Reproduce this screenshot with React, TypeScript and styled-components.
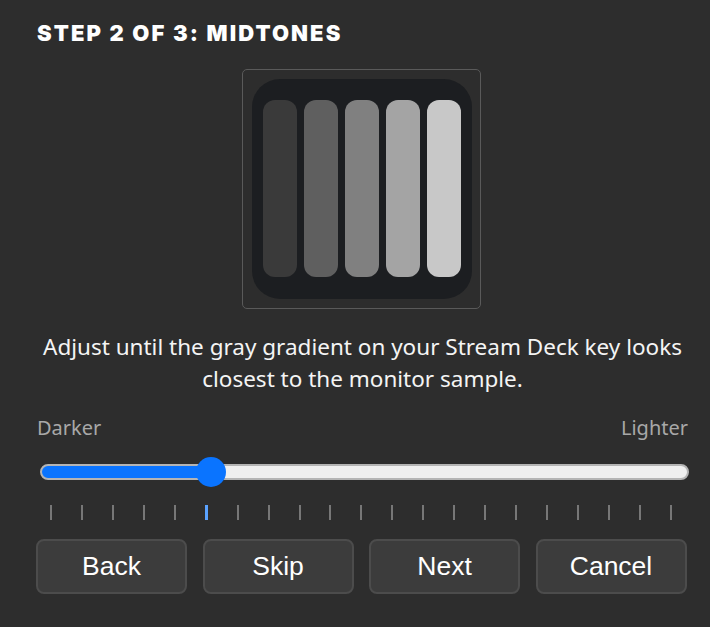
import { useState } from 'react'
import styled, { createGlobalStyle } from 'styled-components'

const GlobalStyle = createGlobalStyle`
  html, body {
    margin: 0;
    padding: 0;
    background: #2d2d2d;
  }
`

const Page = styled.div`
  width: 710px;
  height: 627px;
  box-sizing: border-box;
  padding: 19px 22px 0 37px;
  background: #2d2d2d;
  font-family: 'Noto Sans', 'Open Sans', sans-serif;
  color: #f2f2f2;
  display: flex;
  flex-direction: column;
`

const Title = styled.h2`
  margin: 0;
  font-family: Inter, 'Noto Sans', sans-serif;
  font-weight: 900;
  font-size: 22px;
  line-height: 28px;
  letter-spacing: 2.1px;
  color: #ffffff;
`

const Preview = styled.div`
  align-self: center;
  margin: 22px 0 0 -2px;
  width: 239px;
  height: 240px;
  box-sizing: border-box;
  border: 1.5px solid #5a5a5a;
  border-radius: 5px;
  display: flex;
  align-items: center;
  justify-content: center;
`

const Key = styled.div`
  width: 220px;
  height: 220px;
  box-sizing: border-box;
  padding: 21px 11px 22px;
  background: #1c1e21;
  border-radius: 28px;
  display: flex;
  gap: 7px;
`

const Bar = styled.div<{ $shade: string }>`
  flex: 1;
  border-radius: 12px;
  background: ${p => p.$shade};
`

const Description = styled.p`
  margin: 22px 0 0;
  text-align: center;
  font-size: 22.5px;
  line-height: 32px;
  color: #f4f4f4;
`

const Labels = styled.div`
  margin-top: 20px;
  display: flex;
  justify-content: space-between;
  font-size: 20px;
  line-height: 26px;
  color: #a8a8a8;
`

const Range = styled.input`
  -webkit-appearance: none;
  appearance: none;
  margin: 23px 0 0 3px;
  width: 649px;
  height: 16px;
  box-sizing: border-box;
  border: 2px solid #b4b4b4;
  border-radius: 8px;
  outline: none;

  &::-webkit-slider-thumb {
    -webkit-appearance: none;
    width: 30px;
    height: 30px;
    border-radius: 50%;
    background: #0a74ff;
    border: none;
    cursor: pointer;
  }
`

const Ticks = styled.div`
  margin: 25px 0 0 13px;
  width: 622px;
  display: flex;
  justify-content: space-between;
  align-items: flex-start;
`

const Tick = styled.span<{ $active: boolean }>`
  width: ${p => (p.$active ? '3px' : '2px')};
  height: 15px;
  background: ${p => (p.$active ? '#5aa2ff' : '#777777')};
`

const Buttons = styled.div`
  margin: 19px 0 0 -1px;
  display: grid;
  grid-template-columns: repeat(4, 151px);
  gap: 15.5px;
`

const Button = styled.button`
  height: 55px;
  box-sizing: border-box;
  background: #3c3c3c;
  border: 2px solid #4c4c4c;
  border-radius: 8px;
  color: #ffffff;
  font-family: 'Liberation Sans', Arial, sans-serif;
  font-size: 26.5px;
  cursor: pointer;
`

const shades = ['#3a3a3a', '#5f5f5f', '#808080', '#a4a4a4', '#c8c8c8']

const App = () => {
  const [value, setValue] = useState(5)
  const pct = (value / 20) * 100
  const track = `linear-gradient(to right, #0a74ff 0%, #0a74ff ${pct}%, #efefef ${pct}%, #efefef 100%)`

  return (
    <Page>
      <GlobalStyle />
      <Title>STEP 2 OF 3: MIDTONES</Title>
      <Preview>
        <Key>
          {shades.map(s => (
            <Bar key={s} $shade={s} />
          ))}
        </Key>
      </Preview>
      <Description>
        Adjust until the gray gradient on your Stream Deck key looks
        <br />
        closest to the monitor sample.
      </Description>
      <Labels>
        <span>Darker</span>
        <span>Lighter</span>
      </Labels>
      <Range
        type="range"
        min={0}
        max={20}
        value={value}
        onChange={e => setValue(Number(e.target.value))}
        style={{ background: track }}
      />
      <Ticks>
        {Array.from({ length: 21 }, (_, i) => (
          <Tick key={i} $active={i === value} />
        ))}
      </Ticks>
      <Buttons>
        <Button>Back</Button>
        <Button>Skip</Button>
        <Button>Next</Button>
        <Button>Cancel</Button>
      </Buttons>
    </Page>
  )
}

export default App
